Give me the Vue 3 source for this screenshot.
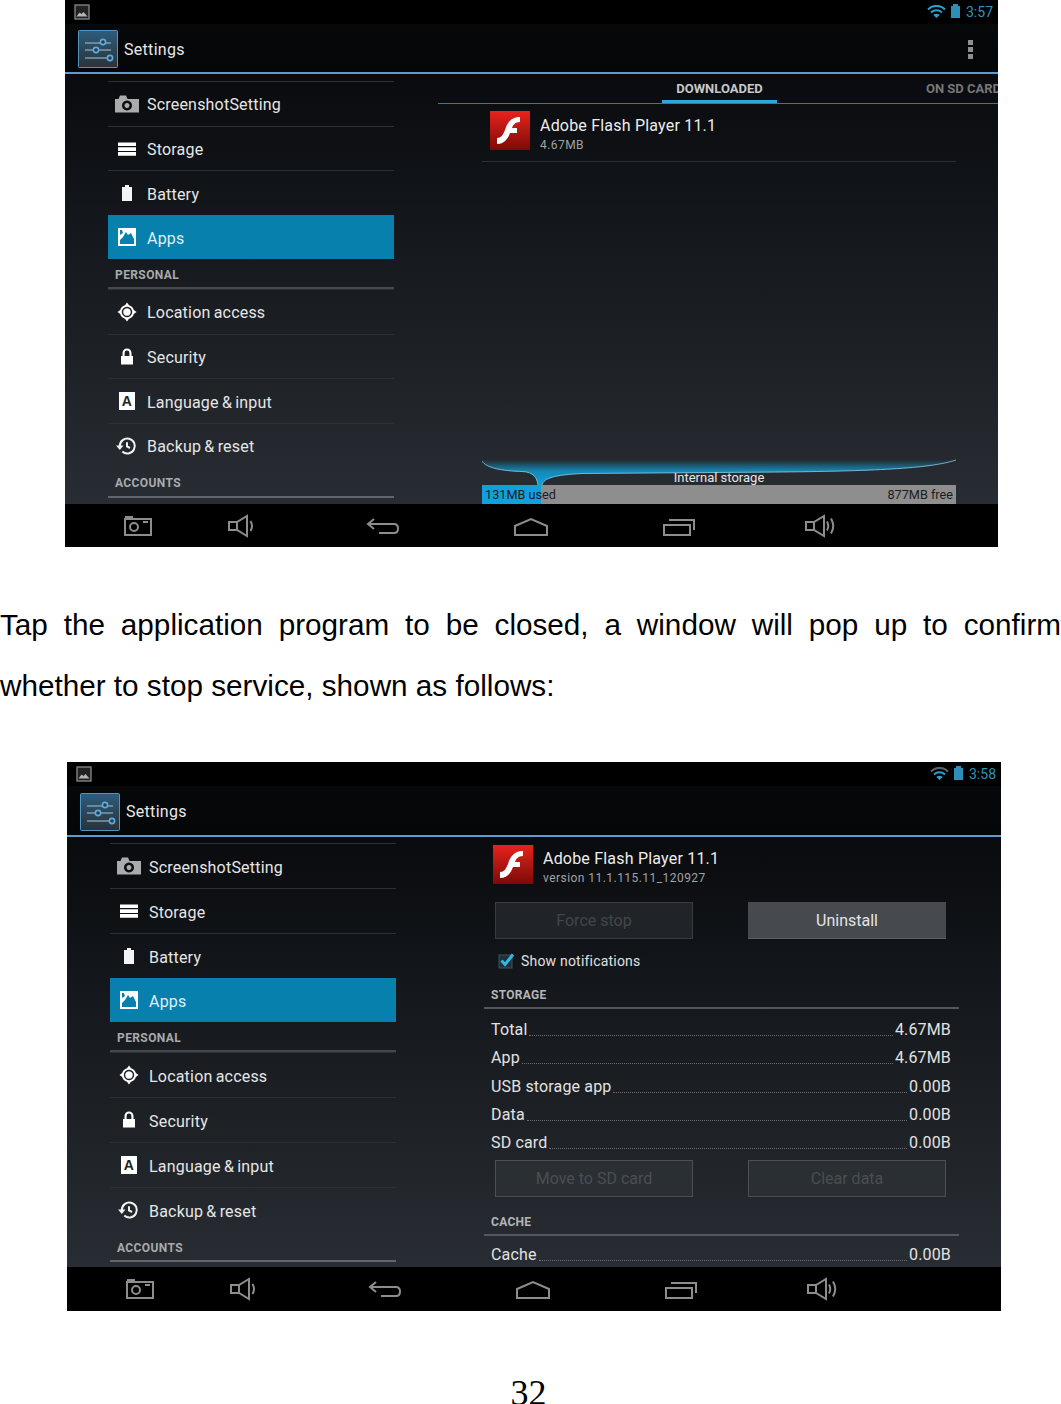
<script setup>
const shots = [
  { id: 'list', time: '3:57' },
  { id: 'detail', time: '3:58' }
]

const menuTop = [
  { label: 'ScreenshotSetting', icon: 'camera' },
  { label: 'Storage', icon: 'storage' },
  { label: 'Battery', icon: 'battery' },
  { label: 'Apps', icon: 'apps', active: true }
]

const menuPersonal = [
  { label: 'Location access', icon: 'location' },
  { label: 'Security', icon: 'lock' },
  { label: 'Language & input', icon: 'lang' },
  { label: 'Backup & reset', icon: 'backup' }
]

const icons = {
  camera: { fill: 'M0 7h3.500L5 3.500h6L12.500 7H24v13.500H0zM12 8.500a5 5 0 1 0 .01 0zM12 11a2.500 2.500 0 1 1-.01 0z', color: '#a9abad' },
  storage: { fill: 'M3 5.500h18v3.600H3zM3 10.300h18v3.600H3zM3 15.100h18v3.600H3z', color: '#fff' },
  battery: { fill: 'M10 4h4v2h3v14H7V6h3z', color: '#f4f4f4' },
  apps: { fill: 'M3 3h18v18H3zM5 19h14v-5l-3-6-3 2-2-3-3 5-3 3zM5 5v5l3-2-1-3z', color: '#fff' },
  location: { fill: 'M12 2.500l2 2.700a6.800 6.800 0 0 1 4.800 4.800l2.700 2-2.700 2a6.800 6.800 0 0 1-4.800 4.800l-2 2.700-2-2.700a6.800 6.800 0 0 1-4.800-4.800l-2.700-2 2.700-2a6.800 6.800 0 0 1 4.800-4.800zM12 6.800a5.200 5.200 0 1 0 .01 0zM12 8.200a3.800 3.800 0 1 1-.01 0z', color: '#fff' },
  lock: { fill: 'M6 11h1.500V8a4.500 4.500 0 0 1 9 0v3H18v8.500H6zM9.600 11h4.800V8a2.400 2.400 0 0 0-4.800 0z', color: '#fff' },
  lang: { fill: 'M4 3h16v18H4z', color: '#fff' },
  backup: { fill: 'M1 11.500h7.500L4.800 16z', line: 'M4.800 12a7.500 7.500 0 1 1 2.500 5.600M12 8.200v4.300l3 1.500', color: '#f2f2f2' }
}

const storageRows = [
  { label: 'Total', value: '4.67MB' },
  { label: 'App', value: '4.67MB' },
  { label: 'USB storage app', value: '0.00B' },
  { label: 'Data', value: '0.00B' },
  { label: 'SD card', value: '0.00B' }
]
</script>

<template>
  <div class="page">
    <template v-for="(shot, n) in shots" :key="shot.id">
      <section class="shot" :class="`shot-${shot.id}`">
        <!-- status bar -->
        <div class="status">
          <svg class="gallery" width="16" height="16" viewBox="0 0 16 16">
            <rect x="1" y="1" width="14" height="14" fill="#222" stroke="#8a8a8a" stroke-width="1.300" />
            <path d="M2.500 12.500l3-4 2 1.500 2-2 4 4.500z" fill="#b5b5b5" />
          </svg>
          <svg class="wifi" width="19" height="14" viewBox="0 0 19 14" fill="none">
            <path class="wifi-top" d="M1 4.500a12 12 0 0 1 17 0" stroke-width="2" />
            <path d="M4 7.500a8 8 0 0 1 11 0" stroke="#2a9fcb" stroke-width="2" />
            <path d="M9.500 13l-3.200-3a4.500 4.500 0 0 1 6.400 0z" fill="#2a9fcb" />
          </svg>
          <span class="batt"></span>
          <span class="clock">{{ shot.time }}</span>
        </div>

        <!-- action bar -->
        <header class="action">
          <svg class="app-icon" width="40" height="38" viewBox="0 0 40 38" fill="none">
            <defs>
              <linearGradient :id="`boxg${n}`" x1="0" y1="0" x2="0" y2="1">
                <stop offset="0" stop-color="#2d5d7c" />
                <stop offset="1" stop-color="#2a3238" />
              </linearGradient>
            </defs>
            <rect x=".5" y=".5" width="39" height="37" rx="1" :fill="`url(#boxg${n})`" stroke="#4d96c4" />
            <path d="M7 13h26M7 20h26M7 28h26" stroke="#7d9bb0" stroke-width="1.300" />
            <circle cx="25" cy="12" r="2.600" fill="#1f3d52" stroke="#63a9dc" stroke-width="1.600" />
            <circle cx="18" cy="20" r="2.600" fill="#1f3d52" stroke="#63a9dc" stroke-width="1.600" />
            <circle cx="32" cy="28" r="2.600" fill="#1f3d52" stroke="#63a9dc" stroke-width="1.600" />
          </svg>
          <span class="action-title">Settings</span>
          <span v-if="shot.id === 'list'" class="overflow"><i></i><i></i><i></i></span>
        </header>

        <div class="content">
          <!-- settings menu -->
          <nav class="side">
            <div v-for="item in menuTop" :key="item.label" class="row" :class="{ active: item.active }">
              <svg class="row-icon" width="24" height="24" viewBox="0 0 24 24" fill="none">
                <path :d="icons[item.icon].fill" :fill="icons[item.icon].color" fill-rule="evenodd" />
              </svg>
              <span>{{ item.label }}</span>
            </div>
            <div class="side-head">PERSONAL</div>
            <div v-for="item in menuPersonal" :key="item.label" class="row">
              <svg class="row-icon" width="24" height="24" viewBox="0 0 24 24" fill="none">
                <path :d="icons[item.icon].fill" :fill="icons[item.icon].color" fill-rule="evenodd" />
                <path v-if="icons[item.icon].line" :d="icons[item.icon].line" :stroke="icons[item.icon].color" stroke-width="2" />
                <text v-if="item.icon === 'lang'" x="12" y="17" class="lang-a">A</text>
              </svg>
              <span>{{ item.label }}</span>
            </div>
            <div class="side-head accounts">ACCOUNTS</div>
          </nav>

          <!-- downloaded apps -->
          <main v-if="shot.id === 'list'" class="main">
            <div class="tabs">
              <span class="tab on">DOWNLOADED</span>
              <span class="tab">ON SD CARD</span>
            </div>
            <div class="pane">
              <div class="app">
                <svg class="flash" width="40" height="39" viewBox="0 0 40 39">
                  <defs>
                    <linearGradient id="flashA" x1="0" y1="0" x2="0" y2="1">
                      <stop offset="0" stop-color="#e8231c" />
                      <stop offset="1" stop-color="#7c0a08" />
                    </linearGradient>
                  </defs>
                  <rect width="40" height="39" fill="url(#flashA)" />
                  <path d="M30 6v5c-5 0-7 3-8 6h5v5h-7c-2 6-6 11-13 11v-6c4 0 6-3 8-8 2-7 6-13 15-13z" fill="#fff" />
                </svg>
                <div class="app-text">
                  <div class="app-name">Adobe Flash Player 11.1</div>
                  <div class="app-sub">4.67MB</div>
                </div>
              </div>
              <div class="spacer"></div>
              <div class="graph">
                <svg width="474" height="27" viewBox="0 0 474 27">
                  <defs>
                    <linearGradient id="glow" gradientUnits="userSpaceOnUse" x1="0" y1="2" x2="0" y2="27">
                      <stop offset="0" stop-color="#1488b6" stop-opacity="0" />
                      <stop offset=".45" stop-color="#1488b6" />
                      <stop offset="1" stop-color="#12a0dc" />
                    </linearGradient>
                  </defs>
                  <path d="M0 3C4 10 20 13 40 13.500 52 14 55 20 56 27H60C62 20 72 17 100 15.500L300 14C400 13 450 10 474 2V0H0z" fill="url(#glow)" />
                  <path d="M0 3C4 10 20 13 40 13.500 52 14 55 20 56 27M60 27C62 20 72 17 100 15.500L300 14C400 13 450 10 474 2" fill="none" stroke="#8ccde6" stroke-width=".8" />
                </svg>
                <span class="graph-label">Internal storage</span>
              </div>
              <div class="bar">
                <span>131MB used</span>
                <span>877MB free</span>
              </div>
            </div>
          </main>

          <!-- app info -->
          <main v-else class="main pane detail">
            <div class="app app-head">
              <svg class="flash" width="40" height="39" viewBox="0 0 40 39">
                <defs>
                  <linearGradient id="flashB" x1="0" y1="0" x2="0" y2="1">
                    <stop offset="0" stop-color="#e8231c" />
                    <stop offset="1" stop-color="#7c0a08" />
                  </linearGradient>
                </defs>
                <rect width="40" height="39" fill="url(#flashB)" />
                <path d="M30 6v5c-5 0-7 3-8 6h5v5h-7c-2 6-6 11-13 11v-6c4 0 6-3 8-8 2-7 6-13 15-13z" fill="#fff" />
              </svg>
              <div class="app-text">
                <div class="app-name">Adobe Flash Player 11.1</div>
                <div class="app-sub">version 11.1.115.11_120927</div>
              </div>
            </div>
            <div class="btns first">
              <span class="btn off">Force stop</span>
              <span class="btn">Uninstall</span>
            </div>
            <div class="check">
              <svg width="17" height="17" viewBox="0 0 17 17" fill="none">
                <rect x="1" y="3" width="13" height="13" fill="#20303a" stroke="#3d5461" />
                <path d="M3.500 8.500l3.500 4L15 2.500" stroke="#33b5e5" stroke-width="3" />
              </svg>
              <span>Show notifications</span>
            </div>
            <div class="sec">STORAGE</div>
            <div v-for="r in storageRows" :key="r.label" class="size-row">
              <span>{{ r.label }}</span>
              <i class="dots"></i>
              <span>{{ r.value }}</span>
            </div>
            <div class="btns second">
              <span class="btn off">Move to SD card</span>
              <span class="btn off">Clear data</span>
            </div>
            <div class="sec cache">CACHE</div>
            <div class="size-row">
              <span>Cache</span>
              <i class="dots"></i>
              <span>0.00B</span>
            </div>
          </main>
        </div>

        <!-- system nav bar -->
        <footer class="navbar">
          <svg width="40" height="24" viewBox="0 0 40 24">
            <path d="M7 5h26v16H7zM7 3h8M25 8h5" />
            <circle cx="16" cy="13" r="4" />
          </svg>
          <svg width="40" height="24" viewBox="0 0 40 24">
            <path d="M8 8h8l10-6v20l-10-6H8zM16 8v8M29.500 7q3 5 0 10" />
          </svg>
          <svg width="40" height="24" viewBox="0 0 40 24">
            <path d="M11 5L5 10l6 5M5 10h26q4 0 4 4.500T31 19H16" />
          </svg>
          <svg width="40" height="24" viewBox="0 0 40 24">
            <path d="M4 21v-9L20 5l16 7v9z" />
          </svg>
          <svg width="40" height="24" viewBox="0 0 40 24">
            <path d="M5 11h26v10H5zM10 6h25v10" />
          </svg>
          <svg width="40" height="24" viewBox="0 0 40 24">
            <path d="M6 8h8l10-6v20l-10-6H6zM14 8v8M27 7.500q2.500 4.500 0 9M31 4.500q4.500 7.500 0 15" />
          </svg>
        </footer>
      </section>

      <p v-if="n === 0" class="caption">Tap the application program to be closed, a window will pop up to confirm whether to stop service, shown as follows:</p>
    </template>

    <div class="page-num">32</div>
  </div>
</template>

<style scoped>
.page {
  width: 1061px;
  height: 1404px;
  overflow: hidden;
  background: #fff;
}

.shot {
  display: flex;
  flex-direction: column;
  width: 933px;
  height: 547px;
  margin-left: 65px;
  overflow: hidden;
  background: #000;
  font-family: Roboto, "Liberation Sans", sans-serif;
  color: #e4e4e4;
}

.shot-detail {
  width: 934px;
  height: 549px;
  margin-left: 67px;
}

.status {
  display: flex;
  align-items: center;
  height: 24px;
  padding: 0 5px 0 9px;
  flex-shrink: 0;
  background: #000;
}

.gallery {
  margin-right: auto;
}

.wifi-top {
  stroke: #2a9fcb;
}

.shot-detail .wifi-top {
  stroke: #5a6468;
}

.batt {
  position: relative;
  width: 9px;
  height: 12px;
  margin: 0 6px 0 5px;
  background: #2c8fb8;
}

.batt::before {
  content: "";
  position: absolute;
  top: -2px;
  left: 2px;
  width: 5px;
  height: 2px;
  background: #2c8fb8;
}

.clock {
  font-size: 14px;
  color: #2f94bb;
}

.action {
  display: flex;
  align-items: center;
  height: 48px;
  padding: 2px 25px 0 13px;
  box-sizing: border-box;
  flex-shrink: 0;
  background: linear-gradient(#06080a, #050608);
}

.shot-detail .action {
  height: 49px;
}

.action-title {
  margin-left: 6px;
  font-size: 16px;
  letter-spacing: .3px;
  color: #e8e8e8;
}

.overflow {
  display: flex;
  flex-direction: column;
  gap: 2px;
  margin-left: auto;
}

.overflow i {
  width: 5px;
  height: 5px;
  background: #8e8e8e;
}

.content {
  display: flex;
  flex: 1;
  min-height: 0;
  overflow: hidden;
  border-top: 2px solid #5b9bd0;
  background: linear-gradient(#090b0e, #282d33);
}

.side {
  width: 286px;
  margin-left: 43px;
  padding-top: 7px;
  flex-shrink: 0;
}

.shot-detail .side {
  padding-top: 6px;
}

.row {
  display: flex;
  align-items: center;
  gap: 8px;
  height: 44.7px;
  padding-left: 7px;
  box-sizing: border-box;
  border-top: 1px solid #2c3035;
  font-size: 16px;
  letter-spacing: .2px;
  word-spacing: -1px;
  color: #e6e6e6;
}

.row span {
  margin-top: 2px;
}

.shot-detail .row {
  height: 45px;
}

.row.active {
  height: 44px;
  border-top: 0;
  background: #0880ae;
  color: #dff1f8;
}

.row-icon {
  flex-shrink: 0;
}

.lang-a {
  font-family: "Liberation Sans", sans-serif;
  font-size: 14px;
  font-weight: 700;
  text-anchor: middle;
  fill: #222;
}

.side-head {
  display: flex;
  align-items: center;
  height: 30px;
  padding: 3px 0 0 7px;
  box-sizing: border-box;
  border-bottom: 2px solid #45494e;
  font-size: 12px;
  font-weight: 700;
  letter-spacing: .4px;
  color: #a8aaad;
}

.side-head.accounts {
  border-bottom-color: #62666a;
}

.main {
  display: flex;
  flex: 1;
  flex-direction: column;
  min-width: 0;
  margin-left: 44px;
}

.tabs {
  display: flex;
  height: 30px;
  padding-left: 224px;
  flex-shrink: 0;
  border-bottom: 1px solid #2b7ba3;
  box-sizing: border-box;
}

.tab {
  display: flex;
  align-items: center;
  justify-content: center;
  width: 115px;
  margin-top: 4px;
  padding-bottom: 1px;
  flex-shrink: 0;
  font-size: 13px;
  font-weight: 700;
  color: #777;
  white-space: nowrap;
}

.tab.on {
  margin-right: 149px;
  border-bottom: 3px solid #33a6d8;
  color: #c8c8c8;
}

.tab:not(.on) {
  width: auto;
  padding-bottom: 4px;
}

.pane {
  display: flex;
  flex: 1;
  flex-direction: column;
  padding: 0 42px 0 44px;
}

.detail {
  margin-left: 44px;
  padding: 0 0 0 44px;
  margin-right: 42px;
  flex: 1;
}

.app {
  display: flex;
  align-items: center;
  gap: 10px;
  height: 58px;
  padding-left: 8px;
  box-sizing: border-box;
  border-bottom: 1px solid #2c3035;
}

.app .flash {
  margin-top: -4px;
}

.app-text {
  padding-top: 5px;
}

.app-head {
  height: 39px;
  margin-top: 8px;
  padding-left: 9px;
  border-bottom: 0;
}

.app-head .flash {
  margin-top: 0;
}

.app-head .app-text {
  padding-top: 7px;
}

.flash {
  flex-shrink: 0;
}

.app-name {
  font-size: 16px;
  line-height: 20px;
  letter-spacing: .2px;
  color: #ececec;
}

.app-sub {
  font-size: 12px;
  line-height: 19px;
  letter-spacing: .45px;
  color: #a0a2a5;
}

.spacer {
  flex: 1;
}

.graph {
  position: relative;
  height: 27px;
}

.graph svg {
  display: block;
}

.graph-label {
  position: absolute;
  right: 0;
  bottom: 0;
  left: 0;
  font-size: 13px;
  line-height: 15px;
  text-align: center;
  color: #e6e6e6;
}

.bar {
  display: flex;
  align-items: center;
  justify-content: space-between;
  height: 19px;
  padding: 0 3px;
  background: linear-gradient(90deg, #12a0dc 59px, #8e8e8e 59px);
  font-size: 12.700px;
  color: #1d1d1d;
}

.btns {
  display: flex;
  gap: 55px;
  padding-left: 11px;
}

.btns.first {
  margin-top: 18px;
}

.btns.second {
  margin-top: 4px;
}

.btn {
  display: flex;
  align-items: center;
  justify-content: center;
  width: 198px;
  height: 37px;
  box-sizing: border-box;
  background: #464a4e;
  border-bottom: 1px solid #5b5f63;
  font-size: 16px;
  color: #e4e4e4;
}

.btn.off {
  background: #202428;
  border: 1px solid #383c40;
  color: #42464a;
}

.second .btn.off {
  background: #2a2f34;
  border-color: #4c5054;
  color: #4a4e52;
}

.check {
  display: flex;
  align-items: center;
  gap: 6px;
  height: 48px;
  padding-left: 14px;
  padding-bottom: 1px;
  box-sizing: border-box;
  font-size: 14px;
  letter-spacing: .2px;
  color: #e0e0e0;
}

.sec {
  display: flex;
  align-items: center;
  height: 28px;
  padding: 1px 0 0 7px;
  box-sizing: border-box;
  border-bottom: 2px solid #54585c;
  font-size: 12px;
  font-weight: 700;
  letter-spacing: .3px;
  color: #b4b6b8;
}

.sec.cache {
  height: 31px;
  margin-top: 10px;
  padding-top: 3px;
}

.sec + .size-row {
  margin-top: 5px;
}

.sec.cache + .size-row {
  margin-top: 3px;
}

.size-row {
  display: flex;
  align-items: baseline;
  height: 28.400px;
  padding: 5px 8px 0 7px;
  box-sizing: border-box;
  flex-shrink: 0;
  font-size: 16px;
  line-height: 22px;
  letter-spacing: .15px;
  color: #e2e2e2;
  white-space: nowrap;
}

.dots {
  flex: 1;
  margin: 0 2px;
  border-bottom: 1px dotted #6a6e72;
  transform: translateY(1px);
}

.navbar {
  display: grid;
  grid-template-columns: 103px 142px 148px 148px 141px 40px;
  align-items: center;
  height: 43px;
  padding-left: 53px;
  flex-shrink: 0;
  background: #000;
}

.shot-detail .navbar {
  height: 44px;
}

.navbar svg {
  fill: none;
  stroke: #8d8d8d;
  stroke-width: 2;
}

.caption {
  width: 1061px;
  margin: 46.500px 0;
  font-family: "Liberation Sans", Arial, sans-serif;
  font-size: 29.700px;
  line-height: 61px;
  text-align: justify;
  color: #000;
}

.page-num {
  margin-top: 61px;
  padding-right: 4px;
  font-family: "Liberation Serif", "Times New Roman", serif;
  font-size: 36px;
  line-height: 42px;
  text-align: center;
  color: #000;
}
</style>
